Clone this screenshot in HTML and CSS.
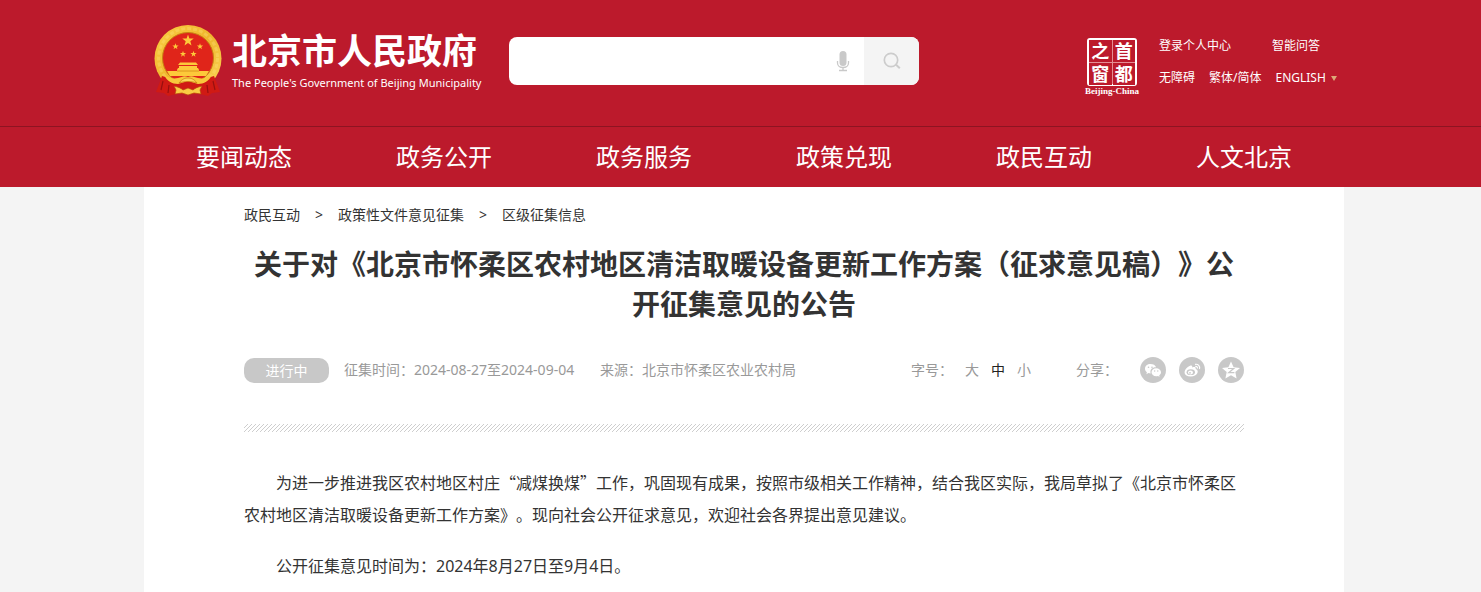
FILE: index.html
```html
<!DOCTYPE html>
<html lang="zh-CN">
<head>
<meta charset="utf-8">
<meta name="viewport" content="width=device-width, initial-scale=1">
<title>关于对《北京市怀柔区农村地区清洁取暖设备更新工作方案（征求意见稿）》公开征集意见的公告</title>
<link rel="stylesheet" href="styles.css">
</head>
<body>
<header class="site-header">
  <div class="gutter">
  <div class="container masthead">
    <a class="brand" href="#">
      <svg class="emblem" viewBox="0 0 68 72" aria-hidden="true">
        <defs>
          <linearGradient id="gold" x1="0" y1="0" x2="1" y2="1">
            <stop offset="0" stop-color="#fbd044"/><stop offset=".5" stop-color="#efb52c"/><stop offset="1" stop-color="#fbd75a"/>
          </linearGradient>
          <path id="star" d="M0-6 1.4-1.9 5.7-1.9 2.3.7 3.5 4.9 0 2.4-3.5 4.9-2.3.7-5.7-1.9-1.4-1.9Z"/>
        </defs>
        <circle cx="34" cy="33.500" r="33.500" fill="url(#gold)"/>
        <circle cx="34" cy="33" r="29.500" fill="none" stroke="#fde27c" stroke-width="3" stroke-dasharray="4 2" opacity=".35"/>
        <circle cx="34" cy="33" r="25.500" fill="#e0251a" stroke="#c98212" stroke-width="1"/>
        <g fill="#fdc93a">
          <use href="#star" x="34" y="15.500"/>
          <use href="#star" transform="translate(21.500 21.500) scale(.55)"/>
          <use href="#star" transform="translate(46 21.500) scale(.55)"/>
          <use href="#star" transform="translate(29 29) scale(.55)"/>
          <use href="#star" transform="translate(39.500 29) scale(.55)"/>
          <path d="M26 37.500h16l2 2.500H24ZM25 41h18v2H25ZM24 43h20l1 2h-22ZM23 44.500h22v4.500H23ZM13 46h42l-3 5H16Z"/>
        </g>
        <path d="M23 46h22" stroke="#d38c18" stroke-width=".8"/>
        <path d="M8 51c5 1 9 4 13 5h26c4-1 8-4 13-5l3 8 3 8-8 1-4 3-8-2H22l-8 2-4-3-8-1 3-8Z" fill="#d01a14"/>
        <path d="M10 50c5 3 9 4 14 3 4-1 6-3 10-1 4-2 6 0 10 1 5 1 9 0 14-3-3 6-8 9-14 9l-10-3-10 3c-6 0-11-3-14-9Z" fill="#f8c83c"/>
        <path d="M25 58c3-4 6-5 9-5s6 1 9 5c-5-2-13-2-18 0Z" fill="#fbd75a" stroke="#c8780e" stroke-width=".7"/>
        <path d="M20 61c4 1 7 2 9 4l5-2 5 2c2-2 5-3 9-4l-2 4 1 4-7-1-6 2-6-2-7 1 1-4Z" fill="#f9cb43" stroke="#b8460e" stroke-width=".7"/>
        <path d="M9 56l-2 9M59 56l2 9M15 60l-1 8M53 60l1 8" stroke="#98100f" stroke-width="1.200"/>
      </svg>
      <span class="brand-text">
        <strong class="brand-name">北京市人民政府</strong>
        <span class="brand-en">The People's Government of Beijing Municipality</span>
      </span>
    </a>
    <form class="search" role="search">
      <input class="search-input" type="text" aria-label="搜索">
      <button class="voice" type="button" aria-label="语音">
        <svg viewBox="0 0 14 22" width="14" height="22" aria-hidden="true"><rect x="3.500" y="1" width="7" height="15" rx="3.500" fill="#c9c9c9"/><path d="M1.500 11v2c0 6 11 6 11 0v-2M7 17.500v3M3 20.500h8" fill="none" stroke="#c9c9c9" stroke-width="1.300"/></svg>
      </button>
      <button class="search-btn" type="submit" aria-label="搜索按钮">
        <svg viewBox="0 0 18 18" width="18" height="18" aria-hidden="true"><circle cx="8" cy="8" r="6.700" fill="none" stroke="#ccc" stroke-width="1.700"/><path d="M12.800 12.500l4 3.700" stroke="#ccc" stroke-width="2"/></svg>
      </button>
    </form>
    <a class="seal" href="#" aria-label="首都之窗">
      <span class="seal-grid"><span>之</span><span>首</span><span>窗</span><span>都</span></span>
      <span class="seal-caption">Beijing-China</span>
    </a>
    <div class="tools">
      <div class="tool-row tool-row-wide"><a href="#">登录个人中心</a><a href="#">智能问答</a></div>
      <div class="tool-row"><a href="#">无障碍</a><a href="#">繁体/简体</a><a class="language" href="#">ENGLISH</a></div>
    </div>
  </div>
  </div>
  <nav class="main-nav gutter">
    <div class="container nav-list">
      <a href="#">要闻动态</a><a href="#">政务公开</a><a href="#">政务服务</a><a href="#">政策兑现</a><a href="#">政民互动</a><a href="#">人文北京</a>
    </div>
  </nav>
</header>
<div class="gutter content">
<main class="container page">
  <nav class="crumbs"><a href="#">政民互动</a><span>&gt;</span><a href="#">政策性文件意见征集</a><span>&gt;</span><a href="#">区级征集信息</a></nav>
  <h1 class="title">关于对《北京市怀柔区农村地区清洁取暖设备更新工作方案（征求意见稿）》公开征集意见的公告</h1>
  <div class="meta">
    <span class="status">进行中</span>
    <span class="period">征集时间：2024-08-27至2024-09-04</span>
    <span>来源：北京市怀柔区农业农村局</span>
    <div class="font-size">
      <span>字号：</span>
      <button type="button">大</button><button class="current" type="button">中</button><button type="button">小</button>
    </div>
    <div class="share">
      <span class="share-label">分享：</span>
      <a href="#" aria-label="微信"><svg viewBox="0 0 26 26" width="26" height="26"><circle cx="13" cy="13" r="13" fill="#c8c8c8"/><path d="M10.500 7C7.300 7 5 9.100 5 11.700c0 1.500.7 2.700 1.900 3.600l-.5 1.900 2-1.100c.8.300 1.600.3 2.300.3-1.200-4 2-6.300 5.400-6.100C15.500 8.200 13.200 7 10.500 7Z" fill="#fff"/><path d="M16.200 11.200c-2.700 0-4.700 1.800-4.700 4s2 4 4.700 4c.6 0 1.200-.1 1.700-.3l1.700.9-.4-1.500c1.100-.8 1.800-1.900 1.800-3.100 0-2.200-2.100-4-4.800-4Z" fill="#fff"/><g fill="#c8c8c8"><circle cx="8.500" cy="10.200" r=".8"/><circle cx="12" cy="10.200" r=".8"/><circle cx="14.700" cy="14" r=".7"/><circle cx="17.800" cy="14" r=".7"/></g></svg></a>
      <a href="#" aria-label="微博"><svg viewBox="0 0 26 26" width="26" height="26"><circle cx="13" cy="13" r="13" fill="#c8c8c8"/><path d="M11.500 8.500c1.700-.5 2 .6 1.600 2 2-.8 4-.7 3.600 1.400 4 1.300 2 7.600-5 7.600-7.200 0-7.900-5.500-2.900-9.400.8-.7 1.700-1.300 2.700-1.600Z" fill="#fff"/><ellipse cx="11.800" cy="15.200" rx="4.200" ry="2.900" fill="#c8c8c8"/><ellipse cx="11.500" cy="15.400" rx="2.500" ry="2" fill="#fff"/><circle cx="11" cy="15.800" r=".9" fill="#c8c8c8"/><path d="M16 7.400c3-.7 5.400 1.800 4.500 4.600M16.300 9.500c1.500-.3 2.400.8 2.100 2" fill="none" stroke="#fff" stroke-width="1.200"/></svg></a>
      <a href="#" aria-label="QQ空间"><svg viewBox="0 0 26 26" width="26" height="26"><circle cx="13" cy="13" r="13" fill="#c8c8c8"/><path d="M13 4.500l2.600 5.700 6.400.7-4.700 4.200 1.300 6.400-5.600-3.200-5.600 3.200 1.300-6.400L4 10.900l6.400-.7Z" fill="#fff"/><path d="M10 11.500h5.700l-5 4.200h5.700" fill="none" stroke="#c8c8c8" stroke-width="1.200"/></svg></a>
    </div>
  </div>
  <svg class="hatch" aria-hidden="true">
    <defs><pattern id="lines" width="4" height="8" patternUnits="userSpaceOnUse"><path d="M-8 8 0 0M-4 8 4 0M0 8 8 0" stroke="#c8c8c8" stroke-width=".9"/></pattern></defs>
    <rect width="100%" height="8" fill="url(#lines)"/>
  </svg>
  <article class="body-text">
    <p class="lead">为进一步推进我区农村地区村庄“减煤换煤”工作，巩固现有成果，按照市级相关工作精神，结合我区实际，我局草拟了《北京市怀柔区农村地区清洁取暖设备更新工作方案》。现向社会公开征求意见，欢迎社会各界提出意见建议。</p>
    <p>公开征集意见时间为：2024年8月27日至9月4日。</p>
  </article>
</main>
</div>
</body>
</html>
```

FILE: styles.css
```css
* { box-sizing: border-box; }
html { overflow: hidden; }
body {
  margin: 0;
  min-height: 100vh;
  display: flex;
  flex-direction: column;
  background: #f4f4f4;
  color: #333;
  font: 14px/20px "Noto Sans", "Noto Sans CJK SC", sans-serif;
  text-spacing-trim: space-all;
}
a { color: inherit; text-decoration: none; }
button { border: 0; padding: 0; background: none; color: inherit; font: inherit; cursor: pointer; }
svg { display: block; }
.gutter { padding-left: 7px; }
.container { width: 100%; max-width: 1200px; margin: 0 auto; }

.site-header { background: #bc1a2c; color: #fff; }
.masthead { display: flex; align-items: flex-start; height: 126px; padding: 25px 0 0 10px; }
.brand { display: flex; flex: none; width: 355px; gap: 10px; }
.emblem { width: 68px; height: 72px; flex: none; }
.brand-text { display: flex; flex-direction: column; padding-top: 5px; white-space: nowrap; }
.brand-name { font-size: 35px; line-height: 42px; font-weight: 700; }
.brand-en { font-size: 11px; line-height: 22px; }

.search { display: flex; flex: none; width: 410px; height: 48px; margin-top: 12px; border-radius: 8px; background: #fff; overflow: hidden; }
.search-input { flex: 1; min-width: 0; border: 0; padding: 0 12px; font: inherit; background: none; outline: 0; }
.voice { display: grid; place-items: center; width: 42px; }
.search-btn { display: grid; place-items: center; width: 55px; background: #f4f4f4; }

.seal { display: flex; flex-direction: column; align-items: center; width: 56px; margin: 13px 0 0 165px; }
.seal-grid { display: grid; grid-template-columns: 1fr 1fr; gap: 1px; width: 50px; height: 48px; border: 2px solid #fff; border-radius: 3px; background: #e58d94; }
.seal-grid span { background: #bc1a2c; font-size: 18px; line-height: 22px; font-weight: 700; text-align: center; }
.seal-caption { font: bold 9px/10px "Liberation Serif", serif; white-space: nowrap; }

.tools { display: flex; flex-direction: column; gap: 12px; margin: 11px 0 0 19px; font-size: 12px; white-space: nowrap; }
.tool-row { display: flex; gap: 14px; }
.tool-row-wide { gap: 41px; }
.language { display: flex; align-items: center; gap: 5px; }
.language::after { content: ""; border: 3px solid transparent; border-top: 5px solid #dda978; border-bottom: 0; }

.main-nav { border-top: 1px solid #8d1422; }
.nav-list { display: grid; grid-template-columns: repeat(6, 1fr); font-size: 24px; line-height: 60px; text-align: center; }

.content { flex: 1; display: flex; }
.page { background: #fff; padding: 18px 100px 0; }
.crumbs { display: flex; gap: 15px; }
.title { margin: 19px 0 0; font-size: 28px; line-height: 40px; font-weight: 700; text-align: center; }
.meta { display: flex; align-items: center; margin-top: 33px; height: 26px; color: #999; white-space: nowrap; }
.status { width: 85px; margin-right: 15px; border-radius: 10px; background: #c8c8c8; color: #fff; line-height: 25px; text-align: center; }
.period { min-width: 240px; margin-right: 16px; }
.font-size { display: flex; gap: 12px; margin-left: auto; margin-right: 45px; }
.current { color: #222; }
.share { display: flex; align-items: center; gap: 13px; }
.share-label { margin-right: 9px; }
.hatch { width: 100%; height: 8px; margin-top: 41px; }
.body-text { padding-top: 34px; font-size: 16px; line-height: 32px; }
.body-text p { margin: 0 0 20px; text-indent: 2em; }
.lead { font-family: "Noto Sans CJK SC", sans-serif; }
```
